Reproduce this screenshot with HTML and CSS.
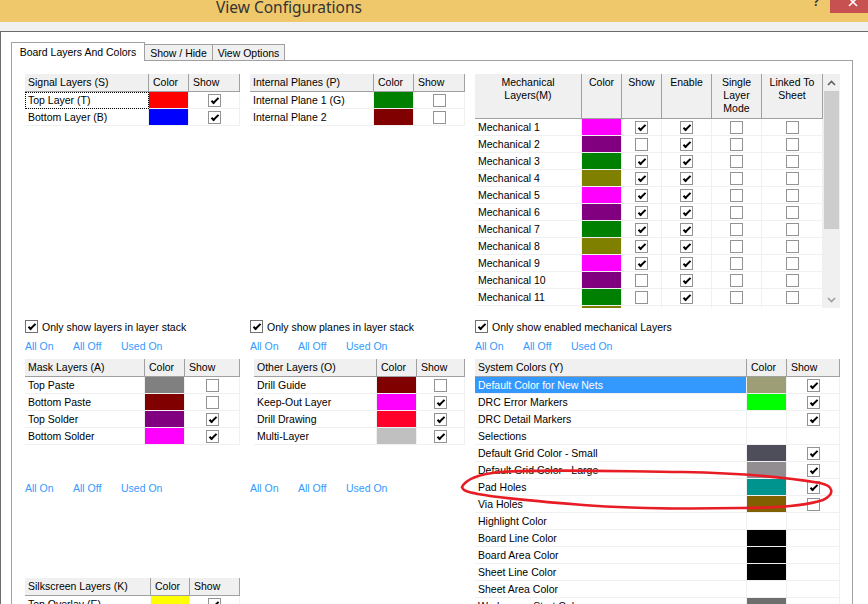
FILE: index.html
```html
<!DOCTYPE html>
<html>
<head>
<meta charset="utf-8">
<title>View Configurations</title>
<link rel="stylesheet" href="styles.css">
</head>
<body>
<div class="titlebar">
  <span class="title">View Configurations</span>
  <span class="help">?</span>
  <span class="close"><svg width="38" height="13" viewBox="0 0 38 13"><path d="M19 -2 L27 6 M27 -2 L19 6" stroke="#fff" stroke-width="1.6" fill="none"/></svg></span>
</div>
<div class="strip"></div>
<div class="client">
  <div class="tabs">
    <div class="tab active w1">Board Layers And Colors</div>
    <div class="tab w2">Show / Hide</div>
    <div class="tab w3">View Options</div>
  </div>
  <div class="panel">
    <!-- column 1 -->
    <div class="col c1">
      <div class="top">
        <div class="tbl t-sig">
          <div class="tr"><div class="th first">Signal Layers (S)</div><div class="th">Color</div><div class="th">Show</div></div>
          <div class="tr"><div class="td focus">Top Layer (T)</div><div class="td sw red"></div><div class="td ck"><span class="cb on"></span></div></div>
          <div class="tr"><div class="td">Bottom Layer (B)</div><div class="td sw blue"></div><div class="td ck"><span class="cb on"></span></div></div>
        </div>
      </div>
      <div class="opt"><span class="cb big on"></span><span>Only show layers in layer stack</span></div>
      <div class="links"><span>All On</span><span>All Off</span><span>Used On</span></div>
      <div class="tbl t-mask">
        <div class="tr"><div class="th first">Mask Layers (A)</div><div class="th">Color</div><div class="th">Show</div></div>
        <div class="tr"><div class="td">Top Paste</div><div class="td sw gray"></div><div class="td ck"><span class="cb"></span></div></div>
        <div class="tr"><div class="td">Bottom Paste</div><div class="td sw maroon"></div><div class="td ck"><span class="cb"></span></div></div>
        <div class="tr"><div class="td">Top Solder</div><div class="td sw purple"></div><div class="td ck"><span class="cb on"></span></div></div>
        <div class="tr"><div class="td">Bottom Solder</div><div class="td sw magenta"></div><div class="td ck"><span class="cb on"></span></div></div>
      </div>
      <div class="links links2"><span>All On</span><span>All Off</span><span>Used On</span></div>
      <div class="tbl t-silk">
        <div class="tr"><div class="th first">Silkscreen Layers (K)</div><div class="th">Color</div><div class="th">Show</div></div>
        <div class="tr"><div class="td">Top Overlay (E)</div><div class="td sw yellow"></div><div class="td ck"><span class="cb on"></span></div></div>
      </div>
    </div>

    <!-- column 2 -->
    <div class="col c2">
      <div class="top">
        <div class="tbl t-sig">
          <div class="tr"><div class="th first">Internal Planes (P)</div><div class="th">Color</div><div class="th">Show</div></div>
          <div class="tr"><div class="td">Internal Plane 1 (G)</div><div class="td sw green"></div><div class="td ck"><span class="cb"></span></div></div>
          <div class="tr"><div class="td">Internal Plane 2</div><div class="td sw maroon"></div><div class="td ck"><span class="cb"></span></div></div>
        </div>
      </div>
      <div class="opt"><span class="cb big on"></span><span>Only show planes in layer stack</span></div>
      <div class="links"><span>All On</span><span>All Off</span><span>Used On</span></div>
      <div class="tbl t-other">
        <div class="tr"><div class="th first">Other Layers (O)</div><div class="th">Color</div><div class="th">Show</div></div>
        <div class="tr"><div class="td">Drill Guide</div><div class="td sw maroon"></div><div class="td ck"><span class="cb"></span></div></div>
        <div class="tr"><div class="td">Keep-Out Layer</div><div class="td sw magenta"></div><div class="td ck"><span class="cb on"></span></div></div>
        <div class="tr"><div class="td">Drill Drawing</div><div class="td sw drill"></div><div class="td ck"><span class="cb on"></span></div></div>
        <div class="tr"><div class="td">Multi-Layer</div><div class="td sw silver"></div><div class="td ck"><span class="cb on"></span></div></div>
      </div>
      <div class="links links2"><span>All On</span><span>All Off</span><span>Used On</span></div>
    </div>

    <!-- column 3 -->
    <div class="col c3">
      <div class="top">
        <div class="mech-wrap">
          <div class="tbl t-mech">
            <div class="tr"><div class="th mh">Mechanical<br>Layers(M)</div><div class="th mh">Color</div><div class="th mh">Show</div><div class="th mh">Enable</div><div class="th mh">Single<br>Layer<br>Mode</div><div class="th mh">Linked To<br>Sheet</div></div>
            <div class="mbody">
              <div class="tr"><div class="td">Mechanical 1</div><div class="td sw magenta"></div><div class="td ck"><span class="cb on"></span></div><div class="td ck"><span class="cb on"></span></div><div class="td ck"><span class="cb"></span></div><div class="td ck"><span class="cb"></span></div></div>
              <div class="tr"><div class="td">Mechanical 2</div><div class="td sw purple"></div><div class="td ck"><span class="cb"></span></div><div class="td ck"><span class="cb on"></span></div><div class="td ck"><span class="cb"></span></div><div class="td ck"><span class="cb"></span></div></div>
              <div class="tr"><div class="td">Mechanical 3</div><div class="td sw green"></div><div class="td ck"><span class="cb on"></span></div><div class="td ck"><span class="cb on"></span></div><div class="td ck"><span class="cb"></span></div><div class="td ck"><span class="cb"></span></div></div>
              <div class="tr"><div class="td">Mechanical 4</div><div class="td sw olive"></div><div class="td ck"><span class="cb on"></span></div><div class="td ck"><span class="cb on"></span></div><div class="td ck"><span class="cb"></span></div><div class="td ck"><span class="cb"></span></div></div>
              <div class="tr"><div class="td">Mechanical 5</div><div class="td sw magenta"></div><div class="td ck"><span class="cb on"></span></div><div class="td ck"><span class="cb on"></span></div><div class="td ck"><span class="cb"></span></div><div class="td ck"><span class="cb"></span></div></div>
              <div class="tr"><div class="td">Mechanical 6</div><div class="td sw purple"></div><div class="td ck"><span class="cb on"></span></div><div class="td ck"><span class="cb on"></span></div><div class="td ck"><span class="cb"></span></div><div class="td ck"><span class="cb"></span></div></div>
              <div class="tr"><div class="td">Mechanical 7</div><div class="td sw green"></div><div class="td ck"><span class="cb on"></span></div><div class="td ck"><span class="cb on"></span></div><div class="td ck"><span class="cb"></span></div><div class="td ck"><span class="cb"></span></div></div>
              <div class="tr"><div class="td">Mechanical 8</div><div class="td sw olive"></div><div class="td ck"><span class="cb on"></span></div><div class="td ck"><span class="cb on"></span></div><div class="td ck"><span class="cb"></span></div><div class="td ck"><span class="cb"></span></div></div>
              <div class="tr"><div class="td">Mechanical 9</div><div class="td sw magenta"></div><div class="td ck"><span class="cb on"></span></div><div class="td ck"><span class="cb on"></span></div><div class="td ck"><span class="cb"></span></div><div class="td ck"><span class="cb"></span></div></div>
              <div class="tr"><div class="td">Mechanical 10</div><div class="td sw purple"></div><div class="td ck"><span class="cb"></span></div><div class="td ck"><span class="cb on"></span></div><div class="td ck"><span class="cb"></span></div><div class="td ck"><span class="cb"></span></div></div>
              <div class="tr"><div class="td">Mechanical 11</div><div class="td sw green"></div><div class="td ck"><span class="cb"></span></div><div class="td ck"><span class="cb on"></span></div><div class="td ck"><span class="cb"></span></div><div class="td ck"><span class="cb"></span></div></div>
              <div class="tr"><div class="td">Mechanical 12</div><div class="td sw olive"></div><div class="td ck"><span class="cb"></span></div><div class="td ck"><span class="cb on"></span></div><div class="td ck"><span class="cb"></span></div><div class="td ck"><span class="cb"></span></div></div>
            </div>
          </div>
          <div class="sb">
            <div class="arrow"><svg width="9" height="6" viewBox="0 0 9 6"><path d="M1 5 L4.5 1.5 L8 5" stroke="#606060" stroke-width="1.6" fill="none"/></svg></div>
            <div class="thumb"></div>
            <div class="fill"></div>
            <div class="arrow"><svg width="9" height="6" viewBox="0 0 9 6"><path d="M1 1 L4.5 4.5 L8 1" stroke="#a0a0a0" stroke-width="1.6" fill="none"/></svg></div>
          </div>
        </div>
      </div>
      <div class="opt"><span class="cb big on"></span><span>Only show enabled mechanical Layers</span></div>
      <div class="links"><span>All On</span><span>All Off</span><span>Used On</span></div>
      <div class="tbl t-sys">
        <div class="tr"><div class="th first">System Colors (Y)</div><div class="th">Color</div><div class="th">Show</div></div>
        <div class="tr"><div class="td sel">Default Color for New Nets</div><div class="td sw khaki"></div><div class="td ck"><span class="cb on"></span></div></div>
        <div class="tr"><div class="td">DRC Error Markers</div><div class="td sw lime"></div><div class="td ck"><span class="cb on"></span></div></div>
        <div class="tr"><div class="td">DRC Detail Markers</div><div class="td sw"></div><div class="td ck"><span class="cb on"></span></div></div>
        <div class="tr"><div class="td">Selections</div><div class="td sw"></div><div class="td ck"></div></div>
        <div class="tr"><div class="td">Default Grid Color - Small</div><div class="td sw slate"></div><div class="td ck"><span class="cb on"></span></div></div>
        <div class="tr"><div class="td">Default Grid Color - Large</div><div class="td sw ash"></div><div class="td ck"><span class="cb on"></span></div></div>
        <div class="tr"><div class="td">Pad Holes</div><div class="td sw teal"></div><div class="td ck"><span class="cb on"></span></div></div>
        <div class="tr"><div class="td">Via Holes</div><div class="td sw brown"></div><div class="td ck"><span class="cb"></span></div></div>
        <div class="tr"><div class="td">Highlight Color</div><div class="td sw"></div><div class="td ck"></div></div>
        <div class="tr"><div class="td">Board Line Color</div><div class="td sw black"></div><div class="td ck"></div></div>
        <div class="tr"><div class="td">Board Area Color</div><div class="td sw black"></div><div class="td ck"></div></div>
        <div class="tr"><div class="td">Sheet Line Color</div><div class="td sw black"></div><div class="td ck"></div></div>
        <div class="tr"><div class="td">Sheet Area Color</div><div class="td sw"></div><div class="td ck"></div></div>
        <div class="tr"><div class="td">Workspace Start Color</div><div class="td sw dim"></div><div class="td ck"></div></div>
      </div>
    </div>
  </div>
</div>
<svg class="annot" width="868" height="604" viewBox="0 0 868 604">
  <path d="M462 487 C466 479 480 474 500 472 C540 469 600 471 683 472 C740 473 790 478 820 483 C834 486 835 494 823 500 C805 506 780 508 740 508 C680 509 620 508 583 505 C545 502 505 499 478 494 C468 492 463 491 462 487" stroke="#e81c24" stroke-width="2.6" fill="none" stroke-linecap="round"/>
</svg>
</body>
</html>
```

FILE: styles.css
```css
html, body {
  margin: 0;
  padding: 0;
}
body {
  width: 868px;
  height: 604px;
  overflow: hidden;
  background: #fff;
  font-family: "Liberation Sans", Arial, sans-serif;
  font-size: 10.5px;
  color: #000;
  position: relative;
}

/* title bar */
.titlebar {
  display: flex;
  align-items: flex-start;
  height: 22px;
  background: #efc86c;
}
.title {
  margin-left: 216px;
  font-family: "Noto Sans", sans-serif;
  font-size: 15.5px;
  line-height: 14px;
  color: #333;
  white-space: nowrap;
}
.help {
  margin-left: auto;
  margin-right: 11px;
  margin-top: -4px;
  font-family: "Noto Sans", sans-serif;
  font-weight: bold;
  font-size: 12px;
  line-height: 12px;
  color: #333;
}
.close {
  width: 38px;
  height: 13px;
  background: #c75050;
  display: block;
}
.close svg { display: block; }
.strip {
  height: 9px;
  background: #f0f0f0;
  border-bottom: 1px solid #6b6b6b;
}

/* client area */
.client {
  border-left: 1px solid #6b6b6b;
  height: 572px;
  box-sizing: border-box;
  padding: 10px 0 0 10px;
}
.tabs {
  display: flex;
  align-items: flex-end;
  height: 18px;
}
.tab {
  height: 16px;
  box-sizing: border-box;
  border: 1px solid #a0a0a0;
  border-left: 0;
  border-bottom: 0;
  background: #f0f0f0;
  display: flex;
  align-items: center;
  justify-content: center;
  white-space: nowrap;
}
.tab.active {
  height: 19px;
  margin-bottom: -1px;
  background: #fff;
  border-left: 1px solid #a0a0a0;
  position: relative;
  z-index: 1;
}
.w1 { width: 134px; }
.w2 { width: 68px; }
.w3 { width: 72px; }

.panel {
  width: 842px;
  height: 560px;
  box-sizing: border-box;
  border: 1px solid #a0a0a0;
  padding: 13px 0 0 13px;
  display: flex;
  gap: 10px;
}
.col {
  display: flex;
  flex-direction: column;
}
.c1, .c2 { width: 215px; }
.c3 { width: 365px; }
.top { height: 243px; }

.opt {
  height: 19px;
  display: flex;
  align-items: center;
  gap: 4px;
  white-space: nowrap;
}
.links {
  height: 23px;
  line-height: 20px;
  display: flex;
  color: #3399ff;
}
.links span { width: 48px; white-space: nowrap; }
.links2 {
  margin-top: 33px;
  height: 20px;
}
.t-silk { margin-top: 80px; }
.t-other { margin-left: 4px; }

/* tables */
.tr { display: grid; }
.t-sig .tr { grid-template-columns: 124px 40px 51px; }
.t-mask .tr { grid-template-columns: 120px 40px 55px; }
.t-other .tr { grid-template-columns: 123px 40px 48px; }
.t-silk .tr { grid-template-columns: 126px 39px 50px; }
.t-mech .tr { grid-template-columns: 107px 40px 40px 50px 50px 61px; }
.t-sys .tr { grid-template-columns: 272px 40px 53px; }

.th {
  height: 18px;
  box-sizing: border-box;
  background: #f0f0f0;
  border-right: 1px solid #a0a0a0;
  border-bottom: 1px solid #a0a0a0;
  line-height: 17px;
  padding-left: 4px;
  white-space: nowrap;
  overflow: hidden;
}
.th.first { padding-left: 3px; }
.th.mh {
  height: 45px;
  line-height: 13px;
  padding: 2px 0 0 0;
  text-align: center;
}
.td {
  height: 17px;
  box-sizing: border-box;
  border-right: 1px solid #f0f0f0;
  border-bottom: 1px solid #f0f0f0;
  line-height: 16px;
  padding-left: 3px;
  white-space: nowrap;
  overflow: hidden;
}
.td.sw { padding: 0; }
.td.ck {
  padding: 0;
  display: flex;
  align-items: center;
  justify-content: center;
}
.td.focus {
  outline: 1px dotted #000;
  outline-offset: -1px;
}
.td.sel {
  background: #3399ff;
  color: #fff;
}

/* mech table + scrollbar */
.mech-wrap { display: flex; }
.t-mech { width: 348px; }
.mbody { height: 189px; overflow: hidden; }
.sb {
  width: 17px;
  height: 234px;
  background: #f0f0f0;
  display: flex;
  flex-direction: column;
  align-items: center;
}
.sb .arrow {
  width: 17px;
  height: 17px;
  display: flex;
  align-items: center;
  justify-content: center;
}
.sb .thumb {
  width: 15px;
  height: 138px;
  background: #cdcdcd;
}
.sb .fill { flex: 1; }

/* checkboxes */
.cb {
  display: block;
  width: 13px;
  height: 13px;
  box-sizing: border-box;
  border: 1px solid #939393;
  background: #fff;
  position: relative;
  flex: none;
}
.cb.big { border-color: #707070; }
.cb.on::after {
  content: "";
  position: absolute;
  left: 4px;
  top: 1px;
  width: 2px;
  height: 6px;
  border: solid #000;
  border-width: 0 2px 2px 0;
  transform: rotate(45deg);
}

/* swatch colours */
.red { background: #ff0000; }
.blue { background: #0000ff; }
.green { background: #008000; }
.maroon { background: #800000; }
.magenta { background: #ff00ff; }
.purple { background: #800080; }
.olive { background: #808000; }
.gray { background: #808080; }
.silver { background: #c0c0c0; }
.yellow { background: #ffff00; }
.drill { background: #ff002a; }
.khaki { background: #9e9e76; }
.lime { background: #00ff00; }
.slate { background: #4e4e5a; }
.ash { background: #918d91; }
.teal { background: #00948f; }
.brown { background: #806000; }
.black { background: #000; }
.dim { background: #6e6e6e; }

/* hand-drawn annotation overlay */
.annot {
  position: absolute;
  left: 0;
  top: 0;
  pointer-events: none;
}
```
